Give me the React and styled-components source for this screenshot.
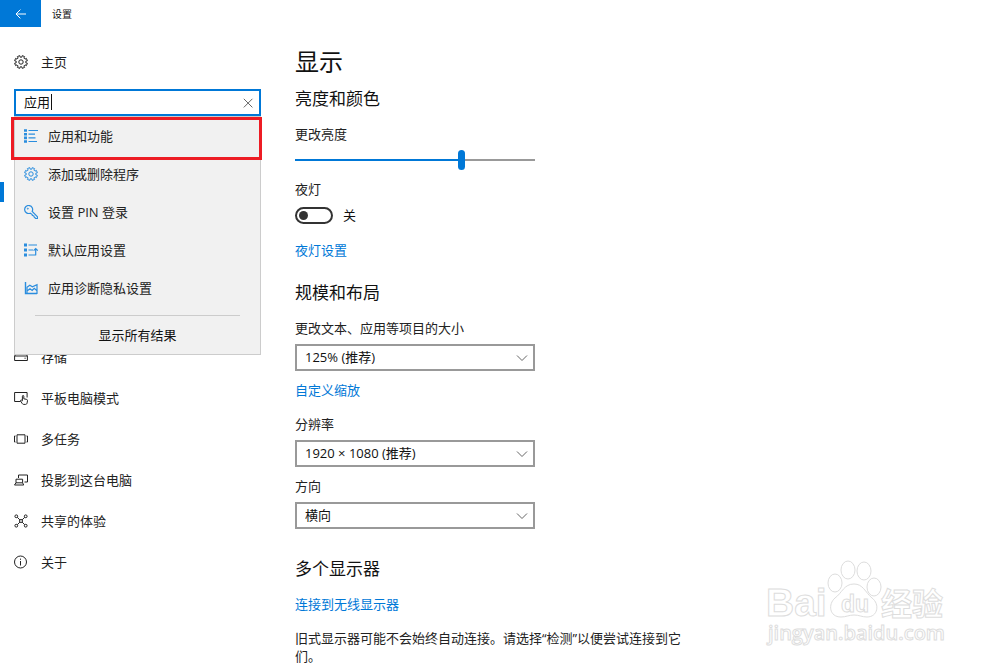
import React from 'react';
import styled, { createGlobalStyle } from 'styled-components';

const BLUE = '#0078d7';

const gearPath = () => {
  const points = [];
  for (let i = 0; i < 8; i++) {
    const a = (i * Math.PI) / 4 - Math.PI / 8;
    [
      [-0.22, 4.9],
      [-0.2, 6.5],
      [0.2, 6.5],
      [0.22, 4.9],
    ].forEach(([offset, r]) => {
      const x = 7 + r * Math.cos(a + offset);
      const y = 7 + r * Math.sin(a + offset);
      points.push(`${x.toFixed(2)} ${y.toFixed(2)}`);
    });
  }
  return `M${points.join('L')}Z`;
};

const GearIcon = () => (
  <Icon viewBox="0 0 14 14">
    <path d={gearPath()} />
    <circle cx="7" cy="7" r="2.2" />
  </Icon>
);

const BackIcon = () => (
  <Icon viewBox="0 0 14 14">
    <path d="M12 7H2M6.4 2.6L2 7l4.4 4.4" />
  </Icon>
);

const ClearIcon = () => (
  <Icon viewBox="0 0 14 14">
    <path d="M2.8 2.8l8.6 8.6M11.4 2.8l-8.6 8.6" />
  </Icon>
);

const ListIcon = () => (
  <Icon viewBox="0 0 14 14">
    <path d="M0 1.5h3M0 5.2h3M0 8.9h3M0 12.5h3" strokeWidth="2.6" />
    <path d="M4.5 1.5H14M4.5 5.2H11M4.5 8.9H11.5M4.5 12.5H13" strokeWidth="1.2" />
  </Icon>
);

const KeyIcon = () => (
  <Icon viewBox="0 0 14 14">
    <path
      d="M8.2 6.3A4 4 0 1 0 6.1 8.2L8 9.3l.4 1.2 1.3.2.4 1.2 1.6 1.6h1.8v-1.7z"
      strokeWidth="1.2"
    />
    <circle cx="3.8" cy="3.7" r=".5" />
  </Icon>
);

const DefaultsIcon = () => (
  <Icon viewBox="0 0 14 14">
    <path d="M0 2h3M0 7h3M0 12h3" strokeWidth="2.8" />
    <path d="M4.5 2H13M4.5 7H9M4.5 12H12.2M11.7 12V5.6M9.6 7.6l2.1-2.1 2.1 2.1" strokeWidth="1.2" />
  </Icon>
);

const ChartIcon = () => (
  <Icon viewBox="0 0 14 14">
    <path d="M1.5 1v11.5H13" strokeWidth="1.4" />
    <path d="M3 6.2l2.8-2 2.6 1.6L13 3.6v8.9H3zM3 10l3-2.2 2.2 1.6 2-2 2.8 2.4" strokeWidth="1.2" />
  </Icon>
);

const StorageIcon = () => (
  <Icon viewBox="0 0 14 14">
    <path d="M.6 6h12.8v4.5H.6zM.6 6l2-2.5h8.8l2 2.5M10.5 8.2h1.2" />
  </Icon>
);

const TabletIcon = () => (
  <Icon viewBox="0 0 14 14">
    <path d="M6.5 10.5H.6v-9h12.5v5" />
    <path d="M8.4 9.8V5.2c0-1 1.4-1 1.4 0v2.6l2.5.5c.9.2 1.3.6 1.2 1.4l-.4 2.2c-.2.9-.6 1.5-1.5 1.5H9.7c-.8 0-1.1-.3-1.5-.9L6.6 10c-.4-.7.5-1.3 1-.8z" />
  </Icon>
);

const MultitaskIcon = () => (
  <Icon viewBox="0 0 14 14">
    <path d="M3 2.8h8v8.4H3zM1.5 4H.5v6h1M12.5 4h1v6h-1" />
  </Icon>
);

const ProjectIcon = () => (
  <Icon viewBox="0 0 14 14">
    <path d="M4.5 5V2h9v7h-3" />
    <path d="M2 6.2h6.6v3.6H2zM2 9.8L.5 12h9.2L8.6 9.8" />
  </Icon>
);

const ShareIcon = () => (
  <Icon viewBox="0 0 14 14">
    <circle cx="2.3" cy="2.3" r="1.4" />
    <circle cx="11.7" cy="2.3" r="1.4" />
    <circle cx="2.3" cy="11.7" r="1.4" />
    <circle cx="11.7" cy="11.7" r="1.4" />
    <circle cx="7" cy="7" r="1.5" />
    <path d="M3.3 3.3l2.6 2.6M10.7 3.3L8.1 5.9M3.3 10.7l2.6-2.6M10.7 10.7L8.1 8.1" />
  </Icon>
);

const InfoIcon = () => (
  <Icon viewBox="0 0 14 14">
    <circle cx="6.5" cy="7" r="6" />
    <path d="M6.5 6v4.5M6.5 3.6v1.2" />
  </Icon>
);

const results = [
  { label: '应用和功能', icon: <ListIcon />, marked: true },
  { label: '添加或删除程序', icon: <GearIcon /> },
  { label: '设置 PIN 登录', icon: <KeyIcon /> },
  { label: '默认应用设置', icon: <DefaultsIcon /> },
  { label: '应用诊断隐私设置', icon: <ChartIcon /> },
];

const navItems = [
  { label: '存储', icon: <StorageIcon /> },
  { label: '平板电脑模式', icon: <TabletIcon /> },
  { label: '多任务', icon: <MultitaskIcon /> },
  { label: '投影到这台电脑', icon: <ProjectIcon /> },
  { label: '共享的体验', icon: <ShareIcon /> },
  { label: '关于', icon: <InfoIcon /> },
];

const SelectField = ({ id, label, value }) => (
  <Field>
    <Label htmlFor={id}>{label}</Label>
    <SelectWrapper>
      <Select id={id} defaultValue={value}>
        <option>{value}</option>
      </Select>
      <Chevron viewBox="0 0 12 12">
        <path d="M1 3.5l5 5 5-5" />
      </Chevron>
    </SelectWrapper>
  </Field>
);

const Watermark = () => (
  <WatermarkSvg viewBox="0 0 190 95">
    <ellipse cx="75" cy="28" rx="7" ry="9" />
    <ellipse cx="88" cy="15" rx="7" ry="9" />
    <ellipse cx="104" cy="16" rx="7" ry="9" />
    <ellipse cx="114" cy="32" rx="7" ry="9" />
    <path d="M94 29c9 0 11 8 18 14 8 6 6 19-5 19-5 0-8-2-13-2s-8 2-13 2c-12 0-13-13-6-19 7-5 9-14 19-14z" />
    <BrandText x="6" y="61" $size={39}>
      Bai
    </BrandText>
    <BrandText x="81" y="57" $size={23}>
      du
    </BrandText>
    <BrandText x="121" y="60" $size={31}>
      经验
    </BrandText>
    <SiteText x="8" y="85">
      jingyan.baidu.com
    </SiteText>
  </WatermarkSvg>
);

const App = () => {
  return (
    <Page>
      <GlobalStyle />
      <TitleBar>
        <BackButton type="button" aria-label="返回">
          <BackIcon />
        </BackButton>
        <WindowTitle>设置</WindowTitle>
      </TitleBar>
      <Body>
        <Sidebar>
          <NavLink href="#home">
            <GearIcon />
            主页
          </NavLink>
          <Search>
            <SearchInput type="text" aria-label="查找设置" defaultValue="应用" />
            <Caret />
            <ClearButton type="button" aria-label="清除">
              <ClearIcon />
            </ClearButton>
            <Popup>
              {results.map(({ label, icon, marked }) => (
                <Result key={label} href="#result" $marked={marked}>
                  {icon}
                  {label}
                </Result>
              ))}
              <Divider />
              <ShowAll type="button">显示所有结果</ShowAll>
            </Popup>
          </Search>
          <CurrentBar />
          <Nav>
            {navItems.map(({ label, icon }) => (
              <NavLink key={label} href="#nav">
                {icon}
                {label}
              </NavLink>
            ))}
          </Nav>
        </Sidebar>
        <Main>
          <Title>显示</Title>
          <Section>
            <Heading>亮度和颜色</Heading>
            <Field>
              <Label htmlFor="brightness">更改亮度</Label>
              <Slider id="brightness" type="range" min="0" max="100" defaultValue="70" />
            </Field>
            <Field>
              <Label htmlFor="night">夜灯</Label>
              <ToggleRow>
                <Toggle id="night" type="checkbox" />
                关
              </ToggleRow>
            </Field>
            <Link href="#night">夜灯设置</Link>
          </Section>
          <Section $top={22}>
            <Heading>规模和布局</Heading>
            <SelectField id="scale" label="更改文本、应用等项目的大小" value="125% (推荐)" />
            <Link href="#scaling" $spaced>
              自定义缩放
            </Link>
            <SelectField id="resolution" label="分辨率" value="1920 × 1080 (推荐)" />
            <SelectField id="orientation" label="方向" value="横向" />
          </Section>
          <Section $top={28}>
            <Heading>多个显示器</Heading>
            <Link href="#wireless" $spaced>
              连接到无线显示器
            </Link>
            <Note>旧式显示器可能不会始终自动连接。请选择“检测”以便尝试连接到它们。</Note>
          </Section>
        </Main>
      </Body>
      <Watermark />
    </Page>
  );
};

export default App;

const GlobalStyle = createGlobalStyle`
  * {
    box-sizing: border-box;
  }
  body {
    margin: 0;
    background: #fff;
  }
  body, button, input, select {
    color: #111;
    font-family: "Open Sans", "Noto Sans CJK SC", sans-serif;
    font-size: 13px;
    line-height: 18px;
  }
  a {
    text-decoration: none;
  }
`;

const Page = styled.div`
  position: relative;
  min-height: 100vh;
`;

const Icon = styled.svg`
  width: 14px;
  height: 14px;
  flex-shrink: 0;
  fill: none;
  stroke: currentColor;
`;

const TitleBar = styled.header`
  display: flex;
  align-items: center;
  height: 27px;
`;

const BackButton = styled.button`
  display: flex;
  align-items: center;
  justify-content: center;
  width: 41px;
  height: 27px;
  padding: 0;
  border: none;
  background: ${BLUE};
  color: #fff;
`;

const WindowTitle = styled.span`
  padding-left: 11px;
  font-size: 10px;
`;

const Body = styled.div`
  display: flex;
  gap: 34px;
`;

const Sidebar = styled.aside`
  width: 261px;
  flex-shrink: 0;
  padding-top: 14px;
`;

const NavLink = styled.a`
  display: flex;
  align-items: center;
  gap: 13px;
  height: 41px;
  padding-left: 14px;
  color: #222;
`;

const Search = styled.div`
  position: relative;
  display: flex;
  align-items: center;
  height: 27px;
  margin: 7px 0 0 14px;
  border: 2px solid ${BLUE};
`;

const SearchInput = styled.input`
  flex: 1;
  min-width: 0;
  padding: 0 0 2px 8px;
  border: none;
  background: transparent;
  outline: none;
`;

const Caret = styled.span`
  position: absolute;
  left: 35px;
  top: 3px;
  width: 1px;
  height: 16px;
  background: #111;
`;

const ClearButton = styled.button`
  display: flex;
  align-items: center;
  padding: 0 4px;
  border: none;
  background: none;
  color: #666;
`;

const Popup = styled.div`
  position: absolute;
  top: 25px;
  left: -2px;
  right: -2px;
  z-index: 1;
  display: flex;
  flex-direction: column;
  border: 1px solid #ccc;
  background: #f1f1f1;
`;

const Result = styled.a`
  position: relative;
  display: flex;
  align-items: center;
  gap: 10px;
  height: 38px;
  padding-left: 9px;
  color: #222;

  ${Icon} {
    color: #2a8dde;
  }

  &::after {
    content: ${({ $marked }) => ($marked ? '""' : 'none')};
    position: absolute;
    inset: 0 -2px -5px -4px;
    border: 3px solid #ed1c24;
  }
`;

const Divider = styled.hr`
  width: calc(100% - 40px);
  margin: 8px 20px 0;
  border: none;
  border-top: 1px solid #ccc;
`;

const ShowAll = styled.button`
  height: 38px;
  padding: 0;
  border: none;
  background: none;
`;

const CurrentBar = styled.div`
  width: 4px;
  height: 20px;
  margin-top: 66px;
  background: ${BLUE};
`;

const Nav = styled.nav`
  margin-top: 134px;
`;

const Main = styled.main`
  flex: 1;
  max-width: 392px;
  padding-top: 19px;
`;

const Title = styled.h1`
  margin: 0 0 9px;
  font-size: 24px;
  font-weight: 400;
  line-height: 32px;
`;

const Section = styled.section`
  display: flex;
  flex-direction: column;
  align-items: flex-start;
  margin-top: ${({ $top = 0 }) => $top}px;
`;

const Heading = styled.h2`
  margin: 0 0 4px;
  font-size: 17px;
  font-weight: 400;
  line-height: 24px;
`;

const Field = styled.div`
  display: flex;
  flex-direction: column;
  gap: 7px;
  width: 240px;
  margin-top: 10px;
`;

const Label = styled.label`
  color: #222;
`;

const Slider = styled.input`
  width: 100%;
  height: 20px;
  margin: 0;
  appearance: none;
  background: linear-gradient(to right, ${BLUE} 70%, #999 70%) center / 100% 2px no-repeat;

  &::-webkit-slider-thumb {
    appearance: none;
    width: 7px;
    height: 20px;
    border-radius: 4px;
    background: ${BLUE};
  }
`;

const ToggleRow = styled.div`
  display: flex;
  align-items: center;
  gap: 10px;
  height: 20px;
`;

const Toggle = styled.input`
  display: flex;
  align-items: center;
  width: 38px;
  height: 17px;
  margin: 0;
  padding: 0 2px;
  appearance: none;
  border: 2px solid #333;
  border-radius: 9px;

  &::before {
    content: '';
    width: 9px;
    height: 9px;
    border-radius: 50%;
    background: #333;
  }
`;

const Link = styled.a`
  margin: ${({ $spaced }) => ($spaced ? '10px 0 6px' : '16px 0 0')};
  color: ${BLUE};
`;

const SelectWrapper = styled.div`
  position: relative;
`;

const Select = styled.select`
  display: block;
  width: 100%;
  height: 27px;
  padding: 0 28px 2px 8px;
  appearance: none;
  border: 2px solid #999;
  border-radius: 0;
  background: #fff;
`;

const Chevron = styled.svg`
  position: absolute;
  top: 8px;
  right: 7px;
  width: 12px;
  height: 12px;
  fill: none;
  stroke: #666;
  pointer-events: none;
`;

const Note = styled.p`
  margin: 10px 0 0;
  color: #222;
`;

const WatermarkSvg = styled.svg`
  position: absolute;
  right: 50px;
  bottom: 18px;
  width: 190px;
  height: 95px;
  fill: #fff;
  stroke: #ddd;
`;

const BrandText = styled.text`
  font-family: "Liberation Sans", "Noto Sans CJK SC", sans-serif;
  font-size: ${({ $size }) => $size}px;
  font-weight: 700;
`;

const SiteText = styled.text`
  font-size: 20px;
  font-weight: 600;
`;
